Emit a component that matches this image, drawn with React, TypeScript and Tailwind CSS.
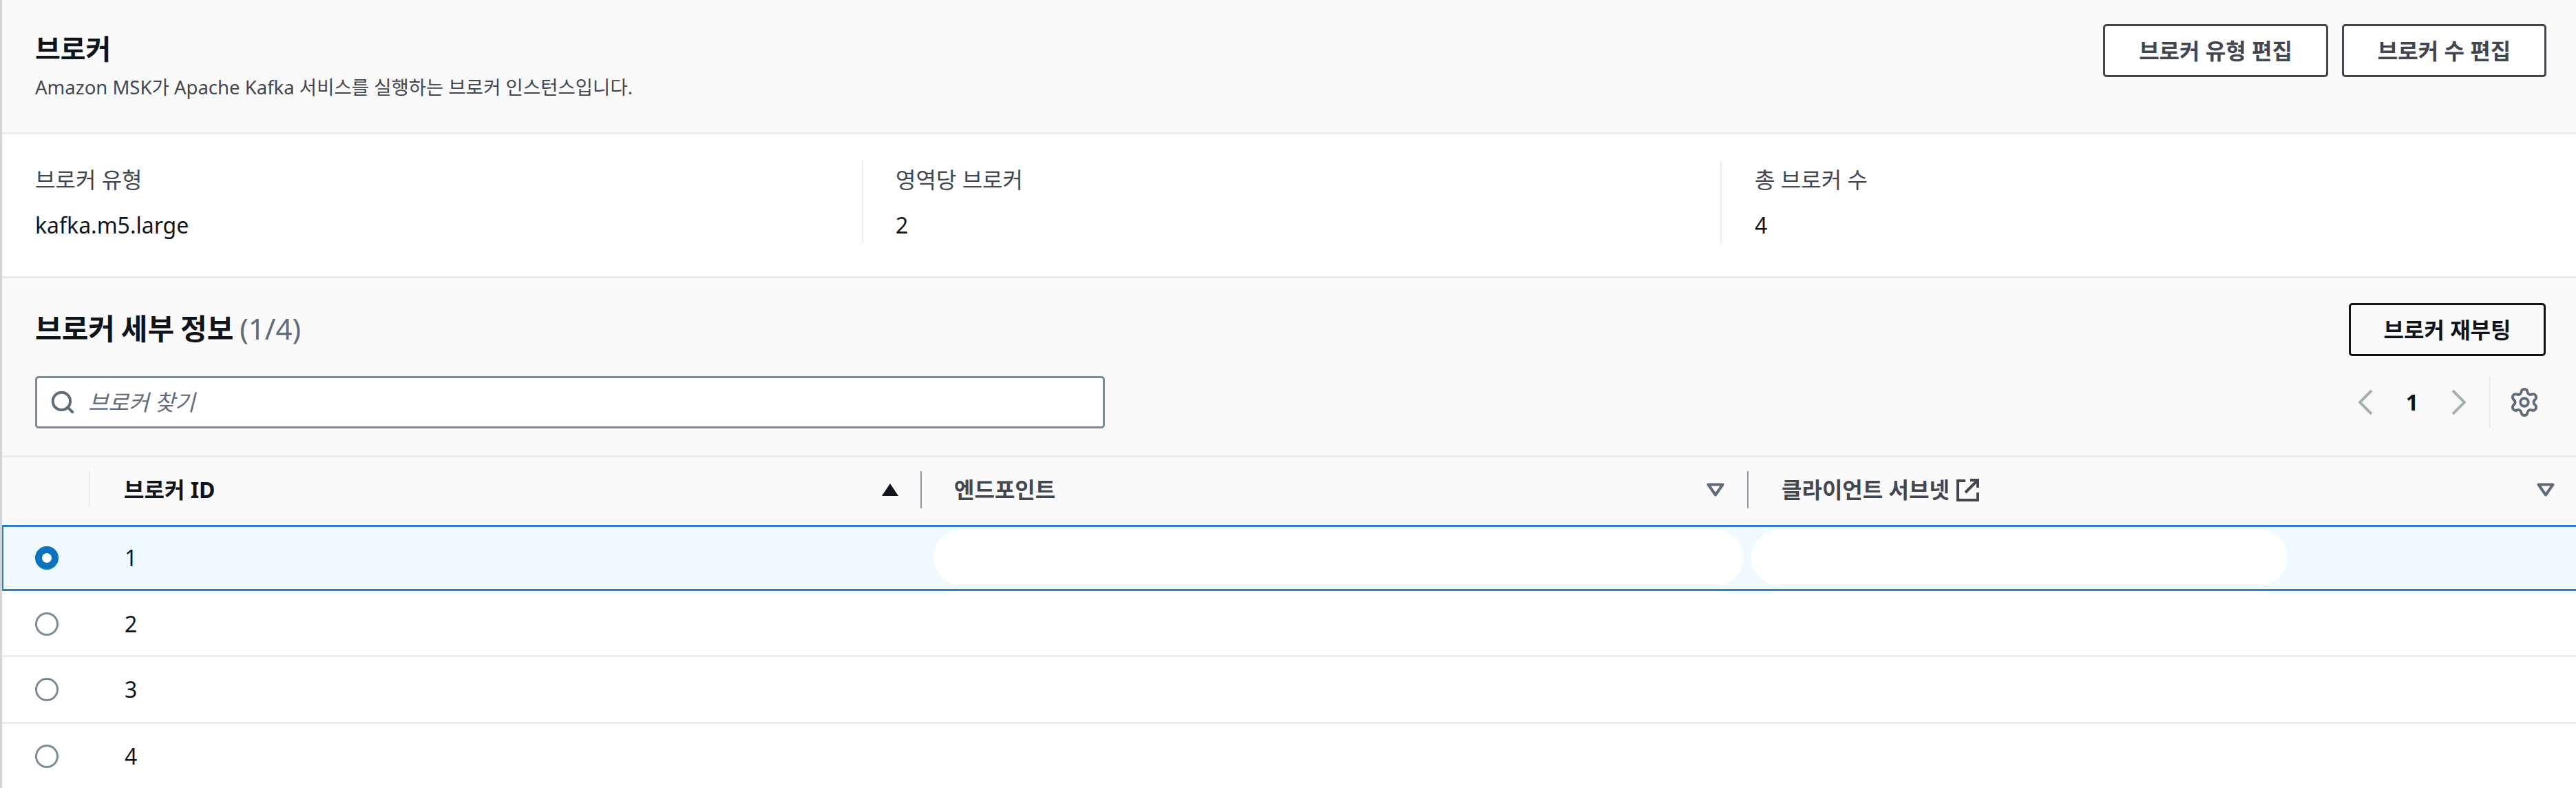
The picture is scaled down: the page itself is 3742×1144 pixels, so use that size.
import { Search, Settings } from 'lucide-react';

const rows = [1, 2, 3, 4];

function OutlineButton({ label, width, dark }: { label: string; width: string; dark?: boolean }) {
  return (
    <button
      className={`h-[77px] ${width} rounded-[5px] border-[3px] text-[32px] leading-none font-bold ${
        dark ? 'border-[#0f141a] text-[#0f141a] bg-transparent' : 'border-[#424650] text-[#424650] bg-white'
      }`}
    >
      {label}
    </button>
  );
}

function Stat({ label, value, className }: { label: string; value: string; className: string }) {
  return (
    <div className={`h-[120px] ${className}`}>
      <div className="text-[32px] leading-[40px] mt-[8px] text-[#424650]">{label}</div>
      <div className="text-[32px] leading-[40px] mt-[26px] text-[#0f141a]">{value}</div>
    </div>
  );
}

function SortDown() {
  return (
    <svg viewBox="0 0 26 20" className="w-[26px] h-[20px]">
      <path d="M2.5 2.5h21L13 17.5z" fill="none" stroke="#5f6b7a" strokeWidth="4" strokeLinejoin="round" />
    </svg>
  );
}

function Chevron({ flip }: { flip?: boolean }) {
  return (
    <svg viewBox="0 0 22 38" className="w-[22px] h-[38px]">
      <path
        d={flip ? 'M3 2l17 17L3 36' : 'M19 2L2 19l17 17'}
        fill="none"
        stroke="#a4b1b3"
        strokeWidth="4"
      />
    </svg>
  );
}

export default function App() {
  return (
    <div
      className="w-[3742px] h-[1144px] overflow-hidden bg-white border-l-[3px] border-[#d1d5d8] text-[#0f141a]"
      style={{ fontFamily: '"Noto Sans", "Noto Sans CJK KR", sans-serif' }}
    >
      {/* Header */}
      <div className="h-[195px] bg-[#fafafa] border-b-[3px] border-[#ebeef0] pl-[48px] pr-[43px] flex justify-between">
        <div className="pt-[46px]">
          <h1 className="text-[40px] leading-[50px] font-bold">브로커</h1>
          <p className="text-[27.5px] leading-[36px] mt-[13px] text-[#424650]">
            Amazon MSK가 Apache Kafka 서비스를 실행하는 브로커 인스턴스입니다.
          </p>
        </div>
        <div className="flex gap-[20px] pt-[35px]">
          <OutlineButton label="브로커 유형 편집" width="w-[327px]" />
          <OutlineButton label="브로커 수 편집" width="w-[297px]" />
        </div>
      </div>

      {/* Stats */}
      <div className="h-[206px] flex pt-[38px]">
        <Stat label="브로커 유형" value="kafka.m5.large" className="w-[1251px] pl-[48px] border-r-2 border-[#ebebf0]" />
        <Stat label="영역당 브로커" value="2" className="w-[1247px] pl-[47px] border-r-2 border-[#ebebf0]" />
        <Stat label="총 브로커 수" value="4" className="flex-1 pl-[48px]" />
      </div>

      {/* Broker details */}
      <div className="h-[263px] bg-[#fafafa] border-y-[3px] border-[#ebeef0] pl-[48px] pr-[44px]">
        <div className="flex justify-between items-start pt-[36px]">
          <h2 className="text-[42px] leading-[52px] font-bold pt-[11px] [word-spacing:-2px]">
            브로커 세부 정보 <span className="font-normal text-[#5f6b7a]">(1/4)</span>
          </h2>
          <OutlineButton label="브로커 재부팅" width="w-[286px]" dark />
        </div>
        <div className="flex justify-between items-center mt-[29px]">
          <div className="w-[1554px] h-[76px] rounded-[5px] border-[3px] border-[#7d8998] bg-white flex items-center pl-[18px] gap-[18px]">
            <Search className="w-[38px] h-[38px] text-[#5f6b7a]" strokeWidth={2.5} />
            <span className="text-[32px] italic text-[#5f6b7a]">브로커 찾기</span>
          </div>
          <div className="flex items-center h-[76px]">
            <Chevron />
            <span className="text-[32px] font-bold w-[112px] text-center">1</span>
            <Chevron flip />
            <div className="w-[2px] h-[76px] bg-[#ebebf0] ml-[34px] mr-[26px]" />
            <Settings className="w-[46px] h-[46px] mr-[8px] text-[#5f6b7a]" strokeWidth={2} />
          </div>
        </div>
      </div>

      {/* Table header */}
      <div className="h-[98px] pb-[4px] bg-[#fafafa] grid grid-cols-[128px_1208px_1201px_1fr] items-center text-[32px] font-bold">
        <div className="h-[52px] border-r-2 border-[#ebebf0]" />
        <div className="h-[54px] flex items-center justify-between pl-[49px] pr-[31px] border-r-2 border-[#8d99a8]">
          <span>브로커 ID</span>
          <svg viewBox="0 0 26 20" className="w-[26px] h-[20px]">
            <path d="M13 1L25 19H1z" fill="#0f141a" />
          </svg>
        </div>
        <div className="h-[54px] flex items-center justify-between pl-[47px] pr-[33px] border-r-2 border-[#8d99a8] text-[#424650]">
          <span>엔드포인트</span>
          <SortDown />
        </div>
        <div className="h-[54px] flex items-center justify-between pl-[48px] pr-[31px] text-[#424650]">
          <span className="flex items-center gap-[10px]">
            클라이언트 서브넷
            <svg viewBox="0 0 33 33" className="w-[33px] h-[33px]">
              <path
                d="M13 3H2v28h29V20M20 2h11v11M31 2L13 20"
                fill="none"
                stroke="#424650"
                strokeWidth="4"
              />
            </svg>
          </span>
          <SortDown />
        </div>
      </div>

      {/* Rows */}
      {rows.map(id => (
        <div
          key={id}
          className={`grid grid-cols-[126px_1225px_1188px_1fr] items-center text-[32px] border-t-[3px] ${
            id === 1
              ? 'h-[96px] bg-[#f0f9ff] border-b-[3px] border-l-[2px] border-[#2f7fc4]'
              : id === 2
              ? 'h-[93px] pl-[2px] border-transparent'
              : id === 3
              ? 'h-[97px] pl-[2px] border-[#ebeef0]'
              : 'h-[96px] pl-[2px] border-[#ebeef0]'
          }`}
        >
          <div className="pl-[46px]">
            <div
              className={`w-[34px] h-[34px] rounded-full ${
                id === 1 ? 'border-[10px] border-[#0b72bd] bg-white' : 'border-[3px] border-[#7d8998] bg-white'
              }`}
            />
          </div>
          <div className="pl-[50px]">{id}</div>
          {id === 1 ? <div className="h-[81px] -mt-[2px] mr-[11px] rounded-full bg-white" /> : <div />}
          {id === 1 ? <div className="h-[81px] -mt-[2px] w-[779px] rounded-full bg-white" /> : <div />}
        </div>
      ))}
    </div>
  );
}
